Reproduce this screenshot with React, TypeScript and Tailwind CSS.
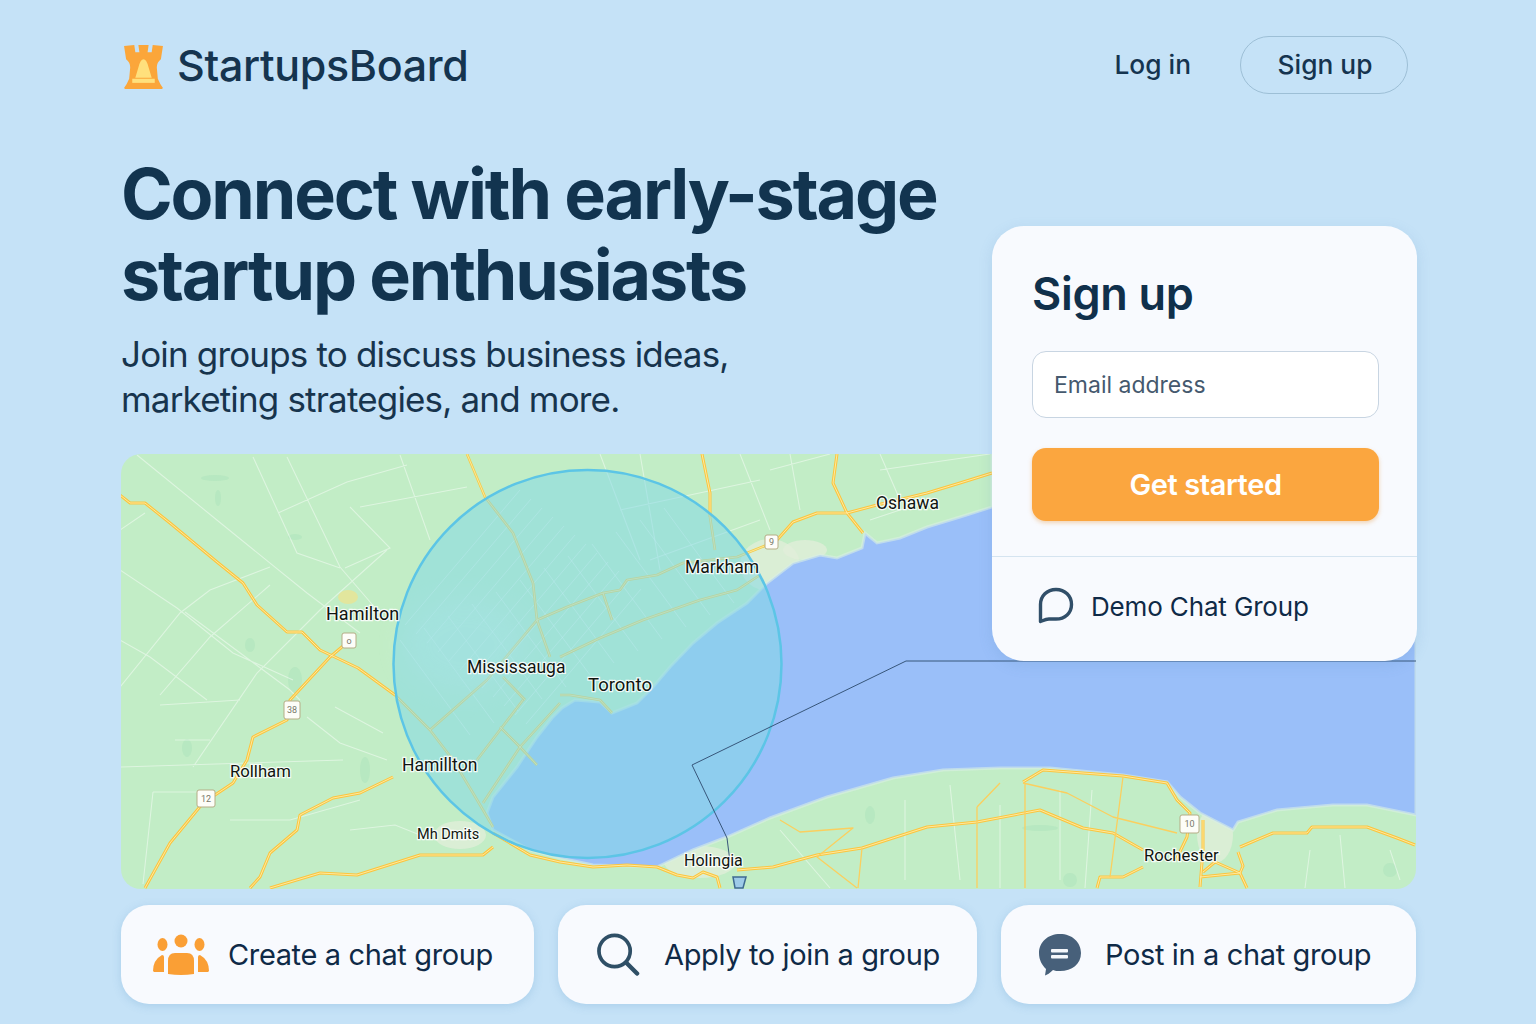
const WATER =
  'M1416 454V815L1367 805L1333 805L1277 810L1238 822L1233 830L1200 813L1180 797L1167 782L1123 775L1050 768L1000 768L943 770L893 778L827 797L770 818L727 837L693 850L657 867L593 865L560 858L530 850L493 830L487 813L493 797L517 767L537 737L552 718L562 708L575 700L600 702L612 713L637 703L653 687L670 667L693 643L717 623L747 603L767 583L793 563L820 555L837 558L862 548L865 533L877 543L900 538L927 527L960 517L992 507V454Z';

const highways = [
  'M120 495L130 503L145 503L170 523L217 562L243 583L257 605L287 632L302 632L320 650L358 668L395 695',
  'M349 641L330 657L290 700L287 720L253 737L247 760L233 783L203 803L170 843L145 888',
  'M393 777L360 793L333 798L300 815L297 830L270 853L260 877L250 888',
  'M270 888L320 873L357 875L420 855L483 855L493 847',
  'M702 454L710 493L710 517',
  'M837 454L833 483L847 513L863 533',
  'M767 545L777 540L793 522L817 513L847 513L877 505L927 493L960 483L992 473',
  'M493 833L530 855L560 862L593 867L627 865L657 867L677 875L693 878L703 872L717 877L720 888',
  'M737 870L773 867L817 855L862 848L927 827L977 822L1040 810L1083 828L1113 833L1143 850',
  'M1143 867L1123 877L1100 877L1097 888',
  'M1023 782L1043 770L1123 776L1167 783L1177 800L1190 813L1187 837L1176 860',
  'M1203 820L1203 850L1200 887',
  'M1240 847L1273 833L1307 833L1312 827L1367 827L1397 838L1415 845',
  'M1200 877L1240 873L1247 888M1238 852L1243 866L1240 873L1215 862L1203 872',
];

// these run under the circle, so they come out paler
const cityRoads = [
  'M467 454L485 497L513 533L533 583L537 620L550 657',
  'M430 730L487 680L537 620L567 607L603 593L620 590L627 580L657 575L683 563L737 557L767 545',
  'M560 657L600 638L643 620L700 600L737 590L760 575',
  'M395 695L430 730L453 760L473 793L493 827',
  'M560 703L520 747L483 803',
  'M500 727L520 747L537 765M525 700L503 677M477 760L523 700',
  'M603 593L612 620',
  'M560 695L570 695L600 700L612 713',
  'M710 517L715 550',
];

const sideRoads = [
  'M137 455L223 525L307 593L360 633',
  'M253 457L297 553L340 568',
  'M287 457L340 567L377 610',
  'M278 513L347 482L407 465',
  'M360 507L467 487',
  'M350 507L390 548L345 568',
  'M120 570L177 608L233 653L293 680',
  'M120 640L150 657L207 700',
  'M120 687L180 613L210 590L270 567',
  'M160 695L210 637L270 585',
  'M193 767L257 673L320 610L387 550',
  'M120 767L343 760',
  'M153 792H197M153 792L143 884',
  'M307 717L340 743L387 760',
  'M335 707L383 733',
  'M120 530L145 513',
  'M185 612L290 690L300 700',
  'M175 740H210M160 705L240 700',
  'M230 820L290 820L360 800',
  'M350 830L395 825L420 835',
  'M400 455L430 540',
  'M1000 805V888M1060 790V880M1092 790L1085 888',
  'M1310 850L1305 888M1340 835L1345 888M1390 850L1400 880',
  'M905 800V880M950 785L960 880M780 830L830 888',
  'M600 454L640 560M640 454L660 570M740 454L770 530M790 454L800 510M880 454L900 500',
  'M620 510L760 480M650 560L760 520M770 470L830 454M880 470L990 454',
  'M870 520L930 500',
];

const blotches = [
  { cx: 215, cy: 478, rx: 14, ry: 3 },
  { cx: 218, cy: 498, rx: 3, ry: 8 },
  { cx: 295, cy: 537, rx: 7, ry: 3 },
  { cx: 250, cy: 645, rx: 5, ry: 7 },
  { cx: 295, cy: 680, rx: 7, ry: 13 },
  { cx: 187, cy: 748, rx: 5, ry: 9 },
  { cx: 365, cy: 770, rx: 5, ry: 13 },
  { cx: 1040, cy: 828, rx: 18, ry: 3 },
  { cx: 1070, cy: 880, rx: 7, ry: 7 },
  { cx: 870, cy: 815, rx: 5, ry: 9 },
  { cx: 1390, cy: 870, rx: 7, ry: 7 },
];

const cityPatches = [
  { cx: 770, cy: 565, rx: 30, ry: 26 },
  { cx: 805, cy: 550, rx: 22, ry: 10 },
  { cx: 700, cy: 862, rx: 36, ry: 16 },
  { cx: 1215, cy: 835, rx: 18, ry: 28 },
  { cx: 460, cy: 835, rx: 26, ry: 14 },
];

const labels = [
  { text: 'Oshawa', x: 876, y: 509, size: 17.5 },
  { text: 'Markham', x: 685, y: 573, size: 17.5 },
  { text: 'Hamilton', x: 326, y: 620, size: 18 },
  { text: 'Mississauga', x: 467, y: 673, size: 17.5 },
  { text: 'Toronto', x: 588, y: 691, size: 18.5 },
  { text: 'Hamillton', x: 402, y: 771, size: 17.5 },
  { text: 'Rollham', x: 230, y: 777, size: 16.7 },
  { text: 'Holingia', x: 684, y: 866, size: 16 },
  { text: 'Rochester', x: 1144, y: 861, size: 16.6 },
  { text: 'Mh Dmits', x: 417, y: 839, size: 14.5 },
];

const shields = [
  { x: 342, y: 633, w: 14, h: 15, label: 'o' },
  { x: 284, y: 701, w: 16, h: 18, label: '38' },
  { x: 197, y: 790, w: 18, h: 17, label: '12' },
  { x: 765, y: 535, w: 13, h: 14, label: '9' },
  { x: 1180, y: 815, w: 19, h: 18, label: '10' },
];

function cityGrid() {
  const lines: string[] = [];
  for (let i = 0; i < 12; i++) {
    lines.push(`M${400 + i * 24} ${640 - i * 12}L${470 + i * 24} ${735 - i * 12}`);
    lines.push(`M${405 + i * 11} ${625 + i * 9}L${520 + i * 11} ${490 + i * 9}`);
  }
  return lines.join('');
}

function LakeMap() {
  return (
    <svg viewBox="121 454 1295 435" className="block h-[435px] w-[1295px] rounded-[20px]">
      <rect x="121" y="454" width="1295" height="435" fill="#c2edc6" />
      {blotches.map((b) => (
        <ellipse key={`${b.cx}-${b.cy}`} {...b} fill="#abe3bb" opacity="0.5" />
      ))}
      {cityPatches.map((c) => (
        <ellipse key={`${c.cx}-${c.cy}`} {...c} fill="#e2edd9" opacity="0.75" />
      ))}
      <path d={WATER} fill="#9abff9" stroke="#d9efe4" strokeOpacity="0.6" strokeWidth="3" />
      <ellipse cx="348" cy="597" rx="10" ry="7" fill="#f0e28c" opacity="0.7" />
      <path d={sideRoads.join('')} fill="none" stroke="#ffffff" strokeOpacity="0.45" strokeWidth="1.1" />
      <path d={cityGrid()} fill="none" stroke="#ffffff" strokeOpacity="0.42" strokeWidth="1" />

      <g fill="none" strokeLinejoin="round">
        <path d={highways.join('')} stroke="#fbc53f" strokeWidth="3" />
        <path d={highways.join('')} stroke="#fff2b8" strokeWidth="0.8" />
        <path d={cityRoads.join('')} stroke="#f3cd4e" strokeWidth="2.6" />
        <path d={cityRoads.join('')} stroke="#fff2b8" strokeWidth="0.7" />
        <path
          d="M1025 783V888M1123 777L1110 877M1023 783L1067 793L1113 817L1177 833M780 820L800 832L853 828L817 857L857 888M862 848L858 888M977 807V888M977 807L1000 783"
          stroke="#fbcf5e"
          strokeWidth="1.3"
        />
      </g>

      <ellipse cx="465" cy="645" rx="62" ry="48" fill="#d5f2ee" opacity="0.35" className="blur-md" />
      <circle cx="587.500" cy="664" r="194" fill="#85d8e6" fillOpacity="0.55" stroke="#5cc5e6" strokeWidth="2.5" />
      <path d="M1416 661H906L692 765L727 838L730 862" fill="none" stroke="#37567a" strokeWidth="1" />
      <path d="M733 877H746L743 888H735Z" fill="#9ecbe8" stroke="#3f6a92" strokeWidth="1.5" />

      {shields.map((s) => (
        <g key={s.label}>
          <rect x={s.x} y={s.y} width={s.w} height={s.h} rx="2" fill="#fdfdf8" stroke="#b5ad86" strokeWidth="1" />
          <text
            x={s.x + s.w / 2}
            y={s.y + s.h / 2 + 3}
            textAnchor="middle"
            fontSize="9"
            fontFamily="Roboto, sans-serif"
            fill="#77776a"
          >
            {s.label}
          </text>
        </g>
      ))}
      {labels.map((l) => (
        <text
          key={l.text}
          x={l.x}
          y={l.y}
          fontSize={l.size}
          fontFamily="Roboto, sans-serif"
          fill="#101510"
          stroke="#ffffff"
          strokeWidth="2.5"
          strokeOpacity="0.85"
          paintOrder="stroke"
        >
          {l.text}
        </text>
      ))}
    </svg>
  );
}

function RookLogo() {
  return (
    <svg viewBox="0 0 38 43" className="mt-[3px] ml-[3px] h-[44px] w-[39px] shrink-0">
      <path
        d="M0 1L10 0L11 7L15 7L14 0L24 0L23 7L27 7L28 0L38 1L36 14Q32 17 32 22L33 33Q35 38 38 42L37 43H1L0 42Q3 38 5 33L6 22Q6 17 2 14Z"
        fill="#fba63a"
      />
      <path d="M19 14Q22 14 24 22L27 32H11L14 22Q16 14 19 14Z" fill="#ffe07c" />
      <rect x="8" y="33" width="22" height="4" fill="#ffe07c" />
    </svg>
  );
}

function PeopleIcon() {
  return (
    <svg viewBox="0 0 56 42" className="h-[42px] w-[56px] shrink-0" fill="#fa9f35">
      <circle cx="28" cy="7" r="6.500" />
      <ellipse cx="9.500" cy="10.500" rx="5" ry="6.500" />
      <ellipse cx="46.500" cy="10.500" rx="5" ry="6.500" />
      <path d="M15 27Q15 19 22 19H34Q41 19 41 27V40Q28 42 15 40Z" />
      <path d="M0 37Q0 26 9 21Q11 21 11 23V38H1Z" />
      <path d="M56 37Q56 26 47 21Q45 21 45 23V38H55Z" />
    </svg>
  );
}

function SearchGlass() {
  return (
    <svg viewBox="0 0 44 44" className="h-[44px] w-[43px] shrink-0" fill="none" stroke="#2f4f66">
      <circle cx="18" cy="18" r="16" strokeWidth="3.800" />
      <path d="M30 30L41 41" strokeWidth="4.500" strokeLinecap="round" />
    </svg>
  );
}

function PostIcon() {
  return (
    <svg viewBox="0 0 42 42" className="h-[42px] w-[42px] shrink-0">
      <path
        d="M21 0C33 0 42 8 42 19C42 30 33 37 21 37C18 37 16 37 14 36C11 39 8 41 6 41.500L7 35C3 31 0 26 0 19C0 8 9 0 21 0Z"
        fill="#47607a"
      />
      <rect x="12" y="15" width="17" height="3.500" rx="1" fill="#f4f7fb" />
      <rect x="12" y="21" width="17" height="3.500" rx="1" fill="#f4f7fb" />
    </svg>
  );
}

function DemoBubble() {
  return (
    <svg viewBox="0 0 36 38" className="h-[38px] w-[36px] shrink-0" fill="none">
      <path
        d="M2.500 34.500V17.500C2.500 9 9 2.500 18 2.500C27 2.500 33.500 9 33.500 17.500C33.500 26 27 32 18 32H11C8 32 5 33.500 2.500 34.500Z"
        stroke="#314f69"
        strokeWidth="3.400"
        strokeLinejoin="round"
      />
    </svg>
  );
}

export default function App() {
  return (
    <div className="relative h-[1024px] w-[1536px] overflow-hidden bg-[#c5e2f7] pl-[121px] pt-[36px] font-['Inter',sans-serif] text-[#12324c]">
      <header className="flex h-[58px] w-[1287px] items-center justify-between">
        <div className="flex items-center gap-[14px]">
          <RookLogo />
          <span className="text-[43px] font-[550] tracking-[-0.35px] text-[#15344f]">StartupsBoard</span>
        </div>
        <nav className="flex items-center gap-[49px]">
          <a className="-mt-[1px] text-[26.3px] font-medium text-[#15344f]">Log in</a>
          <a className="flex h-[58px] w-[168px] items-center justify-center rounded-full border border-[#9dbfd6] pb-[1px] pl-[2px] text-[26.3px] font-medium text-[#15344f]">
            Sign up
          </a>
        </nav>
      </header>

      <h1 className="mt-[59px] text-[70px] leading-[81px] font-[650] tracking-[-2.17px] text-[#12344f]">
        Connect with early-stage
        <br />
        startup enthusiasts
      </h1>
      <p className="mt-[17px] text-[35px] leading-[45px] tracking-[-0.83px] text-[#17344d]">
        Join groups to discuss business ideas,
        <br />
        marketing strategies, and more.
      </p>

      <div className="mt-[32px] h-[435px] w-[1295px]">
        <LakeMap />
      </div>

      <div className="mt-[16px] flex w-[1295px] justify-between">
        <div className="flex h-[99px] w-[413px] items-center gap-[19px] rounded-[28px] bg-[#f8fafe] pl-[32px] shadow-[0_2px_8px_rgba(90,150,200,0.25)]">
          <PeopleIcon />
          <span className="text-[29px] tracking-[-0.37px] text-[#0f2a47]">Create a chat group</span>
        </div>
        <div className="flex h-[99px] w-[419px] items-center gap-[24px] rounded-[28px] bg-[#f8fafe] pl-[39px] shadow-[0_2px_8px_rgba(90,150,200,0.25)]">
          <SearchGlass />
          <span className="text-[29px] tracking-[-0.37px] text-[#0f2a47]">Apply to join a group</span>
        </div>
        <div className="flex h-[99px] w-[415px] items-center gap-[24px] rounded-[28px] bg-[#f8fafe] pl-[38px] shadow-[0_2px_8px_rgba(90,150,200,0.25)]">
          <PostIcon />
          <span className="text-[29px] tracking-[-0.37px] text-[#0f2a47]">Post in a chat group</span>
        </div>
      </div>

      <aside className="absolute top-[226px] left-[992px] h-[435px] w-[425px] rounded-[32px] bg-[#f8fafe] shadow-[0_4px_14px_rgba(90,140,190,0.18)]">
        <div className="px-[40px] pt-[39px]">
          <h2 className="text-[45px] leading-[58px] font-semibold tracking-[-0.3px] text-[#10304b]">Sign up</h2>
          <input
            placeholder="Email address"
            className="mt-[28px] h-[67px] w-[347px] rounded-[14px] border border-[#c8d5e2] bg-white pl-[21px] text-[23px] outline-none placeholder:text-[#45596e]"
          />
          <button className="mt-[30px] h-[73px] w-[347px] rounded-[14px] bg-[#fba63f] text-[29px] font-semibold tracking-[-0.4px] text-white shadow-[0_2px_4px_rgba(230,140,40,0.35)]">
            Get started
          </button>
        </div>
        <div className="mt-[35px] flex h-[105px] items-center gap-[17px] border-t border-[#d5e4f0] pb-[6px] pl-[46px]">
          <DemoBubble />
          <span className="text-[26px] tracking-[-0.15px] text-[#0f2a47]">Demo Chat Group</span>
        </div>
      </aside>
    </div>
  );
}
